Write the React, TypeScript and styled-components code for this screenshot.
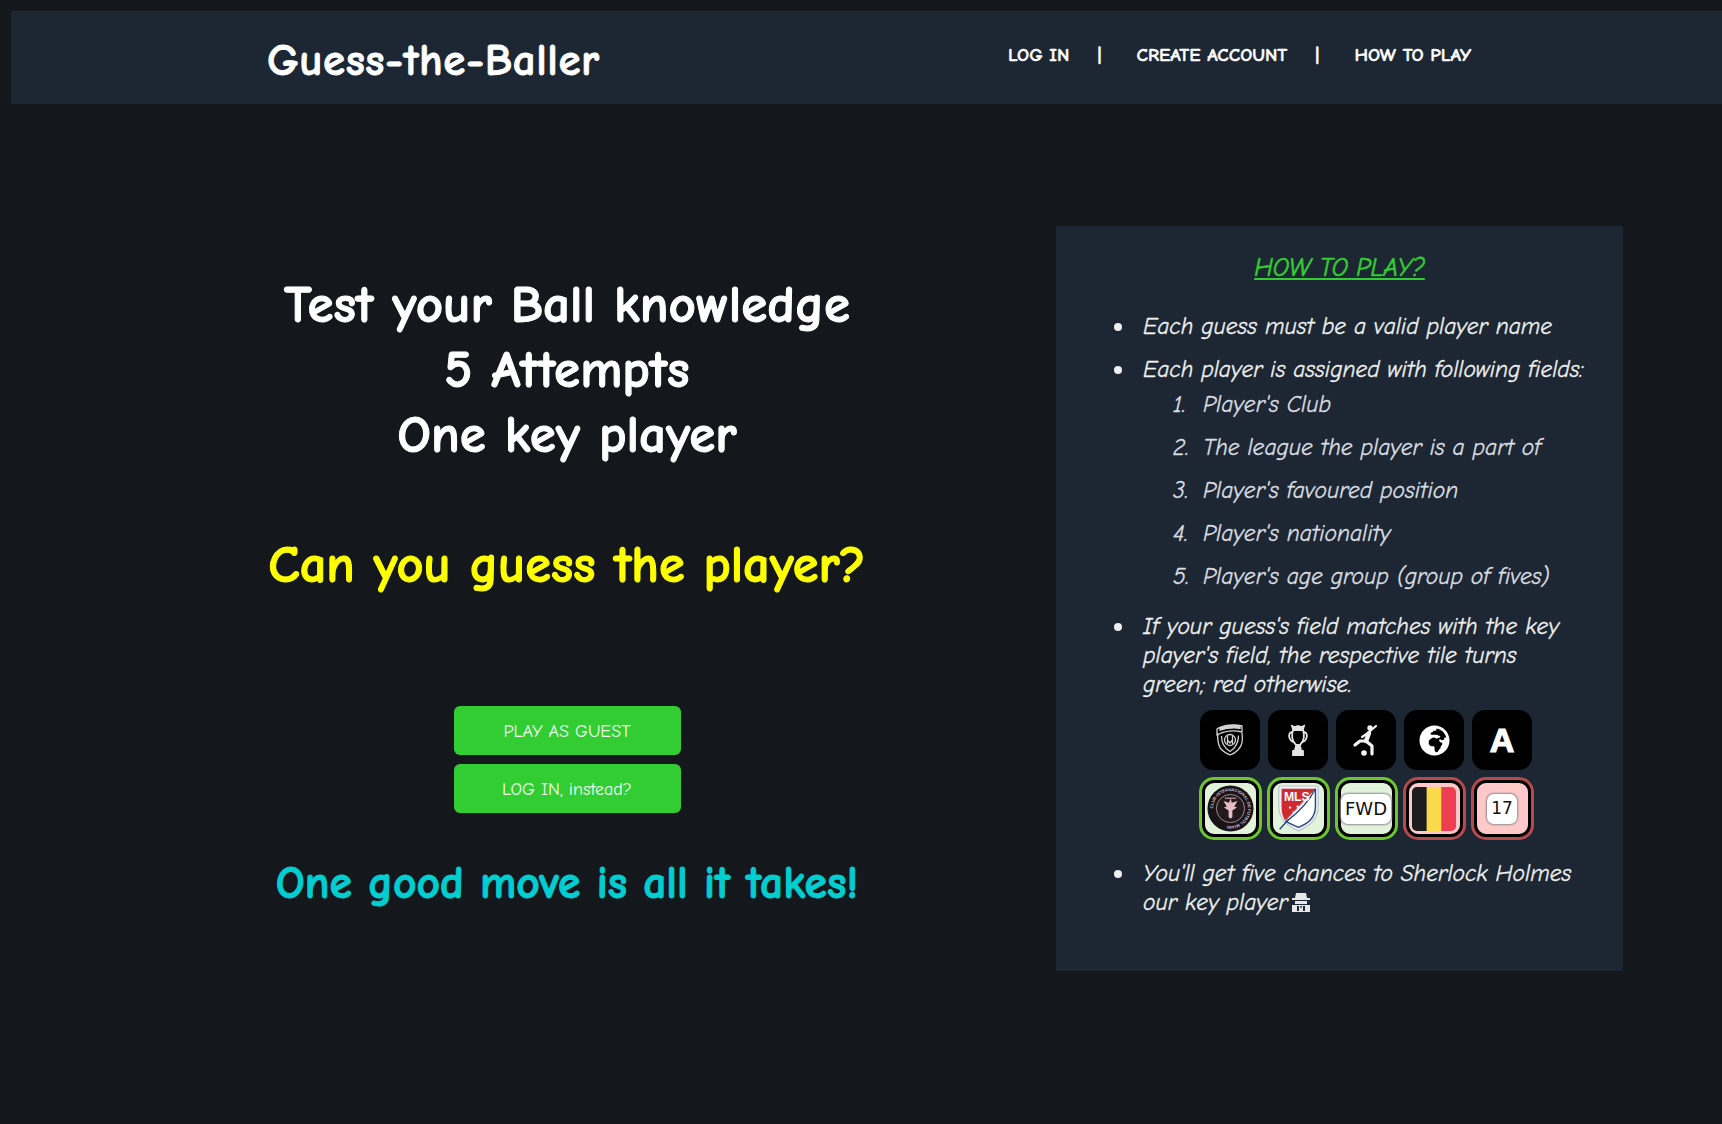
import React from "react";
import styled, { createGlobalStyle } from "styled-components";
import { FaGlobeAfrica } from "react-icons/fa";

const FONT = `"Comic Sans MS", "Comic Neue", Lato, "Open Sans", sans-serif`;

const Global = createGlobalStyle`
  html, body { margin: 0; padding: 0; background: #14181d; }
  body { font-family: ${FONT}; }
`;

const Page = styled.div`
  width: 1722px;
  height: 1124px;
  box-sizing: border-box;
  padding: 11px 0 0 11px;
  background: #14181d;
  overflow: hidden;
`;

const Header = styled.header`
  height: 93px;
  background: #1c2733;
  display: flex;
  align-items: center;
  padding-left: 256px;
`;

const Logo = styled.div`
  width: 741px;
  margin-top: 4px;
  color: #fff;
  font-size: 45px;
  font-weight: 700;
  letter-spacing: 0.5px;
  -webkit-text-stroke: 0.8px #fff;
`;

const Nav = styled.nav`
  display: flex;
  align-items: center;
  gap: 28px;
  color: #fff;
  font-size: 19px;
  font-weight: 700;
  margin-top: -6px;
  -webkit-text-stroke: 0.4px #fff;
`;

const NavSeparator = styled.span`
  margin-right: 7px;
`;

const Main = styled.main`
  display: flex;
  padding-top: 122px;
`;

const Hero = styled.section`
  width: 1112px;
  padding: 0 256px;
  box-sizing: border-box;
  display: flex;
  flex-direction: column;
  align-items: center;
`;

const Headline = styled.h1`
  margin: 46px 0 0;
  color: #fff;
  font-size: 53px;
  line-height: 65px;
  font-weight: 700;
  text-align: center;
  white-space: nowrap;
  -webkit-text-stroke: 1px #fff;
`;

const Question = styled.h2`
  margin: 66px 0 0;
  color: #ffff00;
  font-size: 52.4px;
  line-height: 65px;
  font-weight: 700;
  white-space: nowrap;
  -webkit-text-stroke: 1px #ffff00;
`;

const Buttons = styled.div`
  margin-top: 108px;
  display: flex;
  flex-direction: column;
  gap: 9px;
`;

const GreenButton = styled.button`
  width: 227px;
  height: 49px;
  border: 0;
  padding: 2px 0 0;
  border-radius: 6px;
  background: #32cd32;
  color: #f2fff2;
  font-family: ${FONT};
  font-size: 18px;
`;

const Tagline = styled.h2`
  margin: 38px 0 0;
  color: #00ced1;
  font-size: 45.5px;
  line-height: 65px;
  font-weight: 700;
  white-space: nowrap;
  -webkit-text-stroke: 1px #00ced1;
`;

const Panel = styled.aside`
  width: 567px;
  height: 745px;
  margin-left: -67px;
  box-sizing: border-box;
  background: #1c2733;
  padding: 26px 37px 0 0;
  color: #f0f0f0;
  font-style: italic;
  font-size: 23.5px;
  -webkit-text-stroke: 0.3px currentColor;
`;

const PanelTitle = styled.h3`
  margin: 0 0 28px 37px;
  text-align: center;
  color: #32cd32;
  font-size: 25.5px;
  line-height: 32px;
  font-weight: 500;
  text-decoration: underline;
  -webkit-text-stroke: 0.6px #32cd32;
`;

const Bullets = styled.ul`
  margin: 0;
  padding: 0 0 0 87px;
  list-style: none;
`;

const Bullet = styled.li`
  position: relative;
  line-height: 29px;
  margin-bottom: 14px;

  &::before {
    content: "";
    position: absolute;
    left: -29px;
    top: 11px;
    width: 8px;
    height: 8px;
    border-radius: 50%;
    background: #f0f0f0;
  }
`;

const Steps = styled.ol`
  margin: 6px 0 21px;
  padding: 0 0 0 60px;
  color: #dadde0;
  list-style: none;
  counter-reset: step;
`;

const Step = styled.li`
  position: relative;
  line-height: 29px;
  margin-bottom: 14px;
  counter-increment: step;

  &::before {
    content: counter(step) ".";
    position: absolute;
    left: -30px;
  }
`;

const TileGrid = styled.div`
  display: grid;
  grid-template-columns: repeat(5, 60px);
  column-gap: 8px;
  row-gap: 10px;
  justify-content: center;
  justify-items: center;
  align-items: center;
  margin: 11px 0 22px 3px;
  font-style: normal;
  -webkit-text-stroke: 0;
`;

const HintTile = styled.div`
  width: 60px;
  height: 60px;
  border-radius: 13px;
  background: #000;
  display: flex;
  align-items: center;
  justify-content: center;
  color: #fff;
`;

const LetterGlyph = styled.span`
  font-family: "Liberation Sans", sans-serif;
  font-size: 34px;
  font-weight: 700;
  -webkit-text-stroke: 1.2px #fff;
`;

const ResultTile = styled.div<{ $ok: boolean }>`
  width: 57px;
  height: 57px;
  box-sizing: border-box;
  border-radius: 12px;
  border: 3px solid #000;
  box-shadow: 0 0 0 3px ${(p) => (p.$ok ? "#6cc72c" : "#b64a4c")};
  background: ${(p) => (p.$ok ? "#e2f3dc" : "#ffc9c9")};
  display: flex;
  align-items: center;
  justify-content: center;
`;

const Chip = styled.div`
  background: #fff;
  border-radius: 7px;
  box-shadow: 0 0 2px 1px #8f8f8f;
  color: #111;
  font-family: "DejaVu Sans", sans-serif;
  display: flex;
  align-items: center;
  justify-content: center;
  flex-shrink: 0;
`;

const WideChip = styled(Chip)`
  width: 50px;
  height: 30px;
  font-size: 18px;
`;

const SquareChip = styled(Chip)`
  width: 30px;
  height: 30px;
  font-size: 17px;
  font-weight: 500;
`;

const EmojiWrap = styled.span`
  display: inline-block;
  vertical-align: -3px;
  margin-left: -5px;
`;

const Shield = () => (
  <svg width="30" height="34" viewBox="0 0 30 34" fill="none" stroke="#d2d2d2" strokeWidth="1.3">
    <path d="M3 10c-1 4 0 14 4 17 3 3 6 4 8 5 3-1 6-3 8-5 4-4 5-11 4-17" />
    <path d="M2 6c6-4 17-5 25-3v6c-8-2-18-1-25 3z" />
    <path d="M5 4.500c7-2 14-2.500 20-1.700v2.600c-6-.9-13-.5-20 1.700z" fill="#d2d2d2" />
    <path d="M6.500 13c0 7 3 12 8.500 15.500 5.500-3.500 8.500-8.500 8.500-16" />
    <circle cx="15" cy="17" r="5.500" />
    <path d="M12.500 13v8M17.500 13v8M12.500 17l2.500 3 2.500-3" />
  </svg>
);

const Trophy = () => (
  <svg width="24" height="32" viewBox="0 0 24 32" fill="none" stroke="#e4e4e4" strokeWidth="1.8">
    <path d="M7 5l-1-3 3 1 3-1 3 1 3-1-1 3z" fill="#e4e4e4" />
    <path d="M7 6h10c2 6 1 11-3 15h-4C6 17 5 12 7 6z" />
    <path d="M6 8C1 9 3 17 8 18M18 8c5 1 3 9-2 10" />
    <path d="M10.500 21h3l1 3h-5zM7 31v-4c3-2 7-2 10 0v4z" fill="#e4e4e4" />
  </svg>
);

const Kicker = () => (
  <svg width="28" height="34" viewBox="0 0 28 34" fill="none" stroke="#f4f4f4" strokeWidth="3.200" strokeLinecap="round" strokeLinejoin="round">
    <circle cx="18" cy="5" r="2.700" fill="#f4f4f4" stroke="none" />
    <path d="M17 10L14 18" strokeWidth="4.500" />
    <path d="M17 9L24 3" strokeWidth="2.200" />
    <path d="M16 10L10 14" strokeWidth="2.200" />
    <path d="M14 18L8 18L3 22" />
    <path d="M14 18L20 23L20 31" />
    <circle cx="12" cy="30" r="2.800" fill="#f4f4f4" stroke="none" />
  </svg>
);

const Miami = () => (
  <svg width="47" height="47" viewBox="0 0 50 50">
    <defs>
      <path id="crestRing" d="M25 25m-18.500 0a18.500 18.500 0 1 1 37 0a18.500 18.500 0 1 1-37 0" />
    </defs>
    <circle cx="25" cy="25" r="24.500" fill="#1a1316" />
    <text fontFamily="Liberation Sans" fontSize="4.400" fontWeight="700" fill="#c9bec2">
      <textPath href="#crestRing">CLUB INTERNACIONAL DE FUTBOL MIAMI</textPath>
    </text>
    <circle cx="25" cy="25" r="15" fill="#221a1d" stroke="#e1c0c6" strokeWidth="0.700" />
    <path d="M25 14l-1.500 5-6-2 3.500 6-3 1 5 3v7l2 2 2-2v-7l5-3-3-1 3.500-6-6 2z" fill="#e8bcc4" />
    <path d="M19 14h12" stroke="#e8bcc4" strokeWidth="1" />
  </svg>
);

const Mls = () => (
  <svg width="43" height="47" viewBox="0 0 44 50">
    <path d="M1 1h42v22C43 38 32 44 22 49 12 44 1 38 1 23z" fill="#eef0f4" stroke="#bcc3cf" strokeWidth="1.200" />
    <path d="M4 4h36L8 38C5 34 4 29 4 23z" fill="#cf2a30" />
    <path d="M40 4v19c0 13-9 18-18 22-4-1.500-9-4-13-6C21 30 33 18 40 4z" fill="#fff" stroke="#25468a" strokeWidth="1.500" />
    <path d="M2 47l9-10" stroke="#25468a" strokeWidth="1.500" />
    <text x="6.500" y="17" fontFamily="Liberation Sans" fontWeight="700" fontSize="13" fill="#fff">MLS</text>
    <circle cx="13" cy="24" r="1.200" fill="#fff" />
    <circle cx="21" cy="23" r="1.200" fill="#fff" />
    <circle cx="17" cy="29" r="1.200" fill="#fff" />
  </svg>
);

const Belgium = () => (
  <svg width="44" height="44" viewBox="0 0 46 46">
    <defs>
      <clipPath id="flagRound">
        <rect width="46" height="46" rx="5" />
      </clipPath>
    </defs>
    <g clipPath="url(#flagRound)">
      <rect width="16" height="46" fill="#1d1d1f" />
      <rect x="15.300" width="16" height="46" fill="#fbd94a" />
      <rect x="30.600" width="15.400" height="46" fill="#ee3f52" />
    </g>
  </svg>
);

const Detective = () => (
  <svg width="20" height="21" viewBox="0 0 20 21" fill="#e8e8e8">
    <path d="M5 1h10l1 5h3v2H1V6h3z" />
    <path d="M4 9h12v3H4z" />
    <path d="M1 13h18v7H1z" />
    <path d="M6 14h2v5H6zM12 14h2v5h-2zM9 14h2l-1 3z" fill="#1c2733" />
  </svg>
);

export default function App() {
  return (
    <Page>
      <Global />
      <Header>
        <Logo>Guess-the-Baller</Logo>
        <Nav>
          <span>LOG IN</span>
          <NavSeparator>|</NavSeparator>
          <span>CREATE ACCOUNT</span>
          <NavSeparator>|</NavSeparator>
          <span>HOW TO PLAY</span>
        </Nav>
      </Header>
      <Main>
        <Hero>
          <Headline>
            Test your Ball knowledge
            <br />5 Attempts
            <br />One key player
          </Headline>
          <Question>Can you guess the player?</Question>
          <Buttons>
            <GreenButton>PLAY AS GUEST</GreenButton>
            <GreenButton>LOG IN, instead?</GreenButton>
          </Buttons>
          <Tagline>One good move is all it takes!</Tagline>
        </Hero>
        <Panel>
          <PanelTitle>HOW TO PLAY?</PanelTitle>
          <Bullets>
            <Bullet>Each guess must be a valid player name</Bullet>
            <Bullet>
              Each player is assigned with following fields:
              <Steps>
                <Step>Player's Club</Step>
                <Step>The league the player is a part of</Step>
                <Step>Player's favoured position</Step>
                <Step>Player's nationality</Step>
                <Step>Player's age group (group of fives)</Step>
              </Steps>
            </Bullet>
            <Bullet>
              If your guess's field matches with the key player's field, the respective tile turns green; red otherwise.
              <TileGrid>
                <HintTile><Shield /></HintTile>
                <HintTile><Trophy /></HintTile>
                <HintTile><Kicker /></HintTile>
                <HintTile><FaGlobeAfrica size={31} /></HintTile>
                <HintTile><LetterGlyph>A</LetterGlyph></HintTile>
                <ResultTile $ok><Miami /></ResultTile>
                <ResultTile $ok><Mls /></ResultTile>
                <ResultTile $ok><WideChip>FWD</WideChip></ResultTile>
                <ResultTile $ok={false}><Belgium /></ResultTile>
                <ResultTile $ok={false}><SquareChip>17</SquareChip></ResultTile>
              </TileGrid>
            </Bullet>
            <Bullet>
              You'll get five chances to Sherlock Holmes our key player <EmojiWrap><Detective /></EmojiWrap>
            </Bullet>
          </Bullets>
        </Panel>
      </Main>
    </Page>
  );
}
